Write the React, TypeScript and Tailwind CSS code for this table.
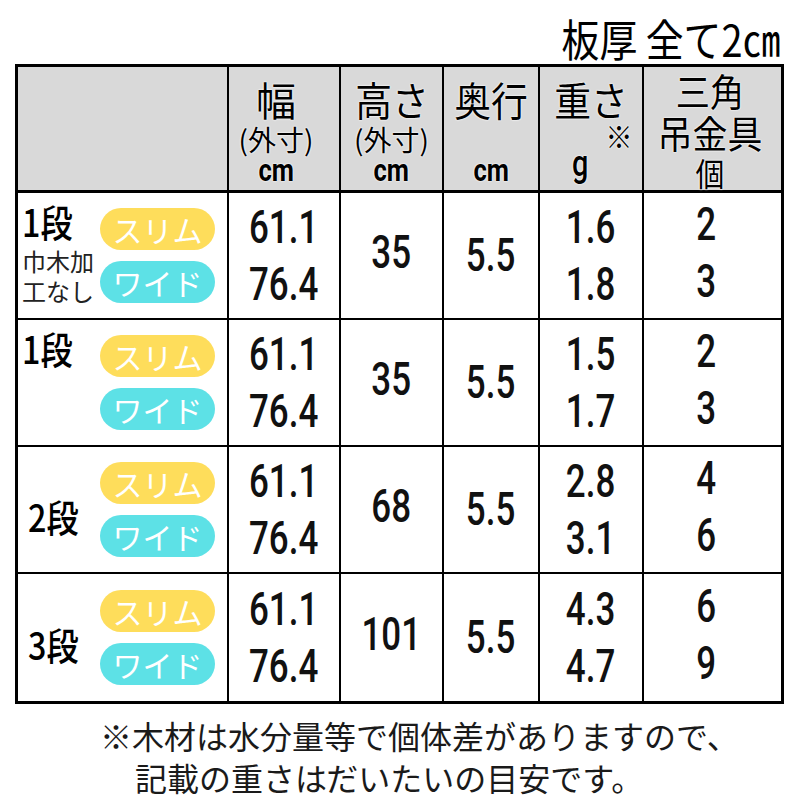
import React from "react";

const jp = "font-['Noto_Sans_CJK_JP','Noto_Sans',sans-serif]";
const num = "font-['Roboto','Noto_Sans_CJK_JP',sans-serif]";
const halo = "[text-shadow:0_0_2px_#fff,0_0_2px_#fff]";

const cols = "grid grid-cols-[211px_112px_103px_96px_104px_143px]";

const rows = [
  { label: "1段", note: true, top: true, w: ["61.1", "76.4"], h: "35", d: "5.5", g: ["1.6", "1.8"], k: ["2", "3"] },
  { label: "1段", note: false, top: true, w: ["61.1", "76.4"], h: "35", d: "5.5", g: ["1.5", "1.7"], k: ["2", "3"] },
  { label: "2段", note: false, top: false, w: ["61.1", "76.4"], h: "68", d: "5.5", g: ["2.8", "3.1"], k: ["4", "6"] },
  { label: "3段", note: false, top: false, w: ["61.1", "76.4"], h: "101", d: "5.5", g: ["4.3", "4.7"], k: ["6", "9"] },
];

function Narrow({ children, className = "" }: { children: React.ReactNode; className?: string }) {
  return <span className={`inline-block whitespace-nowrap ${className}`}>{children}</span>;
}

function Pill({ text, color }: { text: string; color: string }) {
  return (
    <div className={`w-[115px] h-[42px] rounded-full ${color} flex items-center justify-center text-white text-[30px] leading-none ${jp}`}>
      <span className="whitespace-nowrap">{text}</span>
    </div>
  );
}

function Pair({ a, b }: { a: string; b: string }) {
  return (
    <div className={`flex flex-col items-center gap-[12px] text-[46px] leading-[45px] font-medium text-[#111] ${num}`}>
      <Narrow className="scale-x-[0.76]">{a}</Narrow>
      <Narrow className="scale-x-[0.76]">{b}</Narrow>
    </div>
  );
}

export default function App() {
  return (
    <div className="w-[800px] h-[800px] bg-white relative text-black">
      <div className={`flex justify-end pr-[20px] pt-[14px] h-[64px] text-[44px] leading-[48px] ${jp}`}>
        <span className="inline-block scale-x-[0.86] origin-right whitespace-nowrap">板厚 全て2㎝</span>
      </div>

      <div className="ml-[15px] w-[769px] border-[3px] border-black">
        {/* header */}
        <div className={`${cols} h-[126px] bg-[#d9d9d9] border-b-[3px] border-black ${jp} ${halo}`}>
          <div className="border-r-2 border-black" />
          <div className="border-r-2 border-black flex flex-col items-center pt-[10px] pr-[16px]">
            <Narrow className="text-[40px] leading-[44px]">幅</Narrow>
            <Narrow className="text-[28px] leading-[30px] mt-[3px]">(外寸)</Narrow>
            <Narrow className={`text-[32px] leading-[32px] font-bold scale-x-[0.8] ${num}`}>cm</Narrow>
          </div>
          <div className="border-r-2 border-black flex flex-col items-center pt-[10px]">
            <Narrow className="text-[40px] leading-[44px] scale-x-[0.92]">高さ</Narrow>
            <Narrow className="text-[28px] leading-[30px] mt-[3px]">(外寸)</Narrow>
            <Narrow className={`text-[32px] leading-[32px] font-bold scale-x-[0.8] ${num}`}>cm</Narrow>
          </div>
          <div className="border-r-2 border-black flex flex-col items-center pt-[10px]">
            <Narrow className="text-[40px] leading-[44px] scale-x-[0.92]">奥行</Narrow>
            <div className="h-[33px]" />
            <Narrow className={`text-[32px] leading-[32px] font-bold scale-x-[0.8] ${num}`}>cm</Narrow>
          </div>
          <div className="border-r-2 border-black flex flex-col pt-[10px]">
            <div className="text-center">
              <Narrow className="text-[40px] leading-[44px] scale-x-[0.92]">重さ</Narrow>
            </div>
            <div className="text-right pr-[8px] text-[30px] leading-[28px]">
              <Narrow className="scale-x-[0.9]">※</Narrow>
            </div>
            <div className={`pl-[30px] text-[36px] leading-[30px] font-medium ${num}`}>
              <Narrow className="scale-x-[0.8]">g</Narrow>
            </div>
          </div>
          <div className="flex flex-col items-center pt-[2px] pr-[10px]">
            <Narrow className="text-[38px] leading-[42px] scale-x-[0.9]">三角</Narrow>
            <Narrow className="text-[38px] leading-[42px] scale-x-[0.92]">吊金具</Narrow>
            <Narrow className="text-[32px] leading-[38px] scale-x-[0.9]">個</Narrow>
          </div>
        </div>

        {rows.map((r, i) => (
          <div
            key={i}
            className={`${cols} h-[127px] ${i < rows.length - 1 ? "border-b-2 border-black" : ""}`}
          >
            <div className={`border-r-2 border-black flex justify-between pr-[12px] ${r.top ? "items-start" : "items-center"}`}>
              <div className={`font-medium ${jp} ${r.top ? "pt-[8px] pl-[4px]" : "pl-[10px] pt-[14px]"}`}>
                <Narrow className="text-[38px] leading-[40px] scale-x-[0.85] origin-left">{r.label}</Narrow>
                {r.note && (
                  <div className="text-[24px] leading-[30px] mt-[4px] font-normal text-[#222]">
                    <div>巾木加</div>
                    <div>工なし</div>
                  </div>
                )}
              </div>
              <div className="flex flex-col gap-[11px] self-center">
                <Pill text="スリム" color="bg-[#fedd5b]" />
                <Pill text="ワイド" color="bg-[#5de1e6]" />
              </div>
            </div>
            <div className="border-r-2 border-black flex items-center justify-center">
              <Pair a={r.w[0]} b={r.w[1]} />
            </div>
            <div className={`border-r-2 border-black flex items-center justify-center text-[46px] font-medium text-[#111] pb-[6px] ${num}`}>
              <Narrow className="scale-x-[0.76]">{r.h}</Narrow>
            </div>
            <div className={`border-r-2 border-black flex items-center justify-center text-[46px] font-medium text-[#111] ${num}`}>
              <Narrow className="scale-x-[0.76]">{r.d}</Narrow>
            </div>
            <div className="border-r-2 border-black flex items-center justify-center">
              <Pair a={r.g[0]} b={r.g[1]} />
            </div>
            <div className="flex items-center justify-center pr-[18px] pb-[6px]">
              <Pair a={r.k[0]} b={r.k[1]} />
            </div>
          </div>
        ))}
      </div>

      <div className={`flex flex-col text-[32px] leading-[42px] mt-[10px] text-[#1a1a1a] ${jp}`}>
        <div className="pl-[100px] whitespace-nowrap">※木材は水分量等で個体差がありますので、</div>
        <div className="pl-[135px] whitespace-nowrap">記載の重さはだいたいの目安です。</div>
      </div>
    </div>
  );
}
